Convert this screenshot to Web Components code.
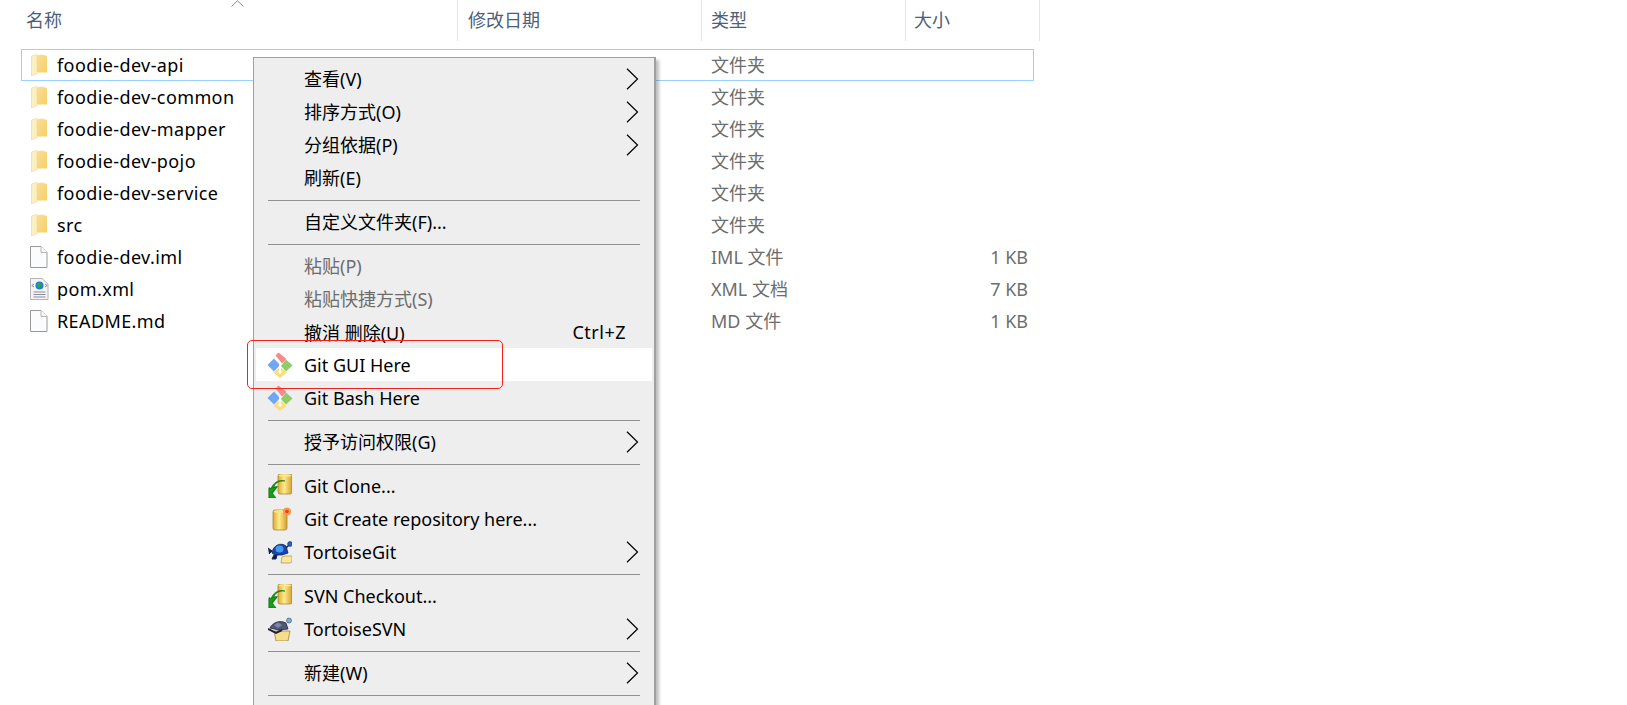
<!doctype html>
<html>
<head>
<meta charset="utf-8">
<title>foodie-dev</title>
<style>
    html, body { margin: 0; height: 100%; overflow: hidden; background: #fff; }
    body { font-family: "Noto Sans", "Noto Sans CJK SC", sans-serif; font-size: 18px; }
</style>
</head>
<body>
<explorer-window>
    <file-header slot="header"></file-header>
    <file-row icon="folder" type="文件夹" selected>foodie-dev-api</file-row>
    <file-row icon="folder" type="文件夹">foodie-dev-common</file-row>
    <file-row icon="folder" type="文件夹">foodie-dev-mapper</file-row>
    <file-row icon="folder" type="文件夹">foodie-dev-pojo</file-row>
    <file-row icon="folder" type="文件夹">foodie-dev-service</file-row>
    <file-row icon="folder" type="文件夹">src</file-row>
    <file-row icon="doc" type="IML 文件" size="1 KB">foodie-dev.iml</file-row>
    <file-row icon="xml" type="XML 文档" size="7 KB">pom.xml</file-row>
    <file-row icon="doc" type="MD 文件" size="1 KB">README.md</file-row>

    <context-menu slot="overlay">
        <menu-item arrow>查看(V)</menu-item>
        <menu-item arrow>排序方式(O)</menu-item>
        <menu-item arrow>分组依据(P)</menu-item>
        <menu-item>刷新(E)</menu-item>
        <menu-sep></menu-sep>
        <menu-item>自定义文件夹(F)...</menu-item>
        <menu-sep></menu-sep>
        <menu-item disabled>粘贴(P)</menu-item>
        <menu-item disabled>粘贴快捷方式(S)</menu-item>
        <menu-item shortcut="Ctrl+Z">撤消 删除(U)</menu-item>
        <menu-item icon="git" hover>Git GUI Here</menu-item>
        <menu-item icon="git">Git Bash Here</menu-item>
        <menu-sep></menu-sep>
        <menu-item arrow>授予访问权限(G)</menu-item>
        <menu-sep></menu-sep>
        <menu-item icon="clone">Git Clone...</menu-item>
        <menu-item icon="create">Git Create repository here...</menu-item>
        <menu-item icon="tgit" arrow>TortoiseGit</menu-item>
        <menu-sep></menu-sep>
        <menu-item icon="clone">SVN Checkout...</menu-item>
        <menu-item icon="tsvn" arrow>TortoiseSVN</menu-item>
        <menu-sep></menu-sep>
        <menu-item arrow>新建(W)</menu-item>
        <menu-sep></menu-sep>
    </context-menu>

    <red-mark slot="overlay"></red-mark>
</explorer-window>

<script>
const can = (x, y, w, h) => `
    <rect x="${x}" y="${y}" width="${w}" height="${h}" rx="2" fill="url(#gold)" stroke="#a8853a" stroke-width=".8"/>
    <ellipse cx="${x + w / 2}" cy="${y + 1.5}" rx="${w / 2 - .5}" ry="1.5" fill="#fbe58a"/>`

const goldDefs = `
    <defs>
        <linearGradient id="gold" x1="0" x2="1" y1="0" y2="0">
            <stop offset="0" stop-color="#e0a92f"/>
            <stop offset=".45" stop-color="#fdeb8e"/>
            <stop offset="1" stop-color="#d79f2a"/>
        </linearGradient>
    </defs>`

const gitMark = `
    <path d="M6 5.500 12 12 6 18.500-.5 12Z" fill="#6ea8f5"/>
    <path d="M18 6.500 24.500 12.500 18 18.500 13 13Z" fill="#8fcb66"/>
    <path d="M12 14 19 19.500 12 25 5.500 19.500Z" fill="#fbdd7a"/>
    <path d="M7.500 2.500 10.500-.5 18.500 6 14 10.500Z" fill="#f58a8a"/>
    <path d="M12 10V19" stroke="#fff" stroke-width="1.600"/>
    <circle cx="12" cy="19" r="1.700" fill="#fff"/>`

const ICONS = {
    folder: `<svg width="18" height="24" viewBox="0 0 18 24">
        <defs><linearGradient id="f" x1="0" x2="1" y1="0" y2="1">
            <stop offset="0" stop-color="#f9e096"/><stop offset="1" stop-color="#f5cf6c"/>
        </linearGradient></defs>
        <path d="M6 2.500 12 1.500 17 3V19.500H6Z" fill="url(#f)"/>
        <path d="M1.500 3 7 1.500V20.500L1.500 23Z" fill="#fdf0c0" stroke="#ecd390" stroke-width=".6"/>
    </svg>`,
    doc: `<svg width="18" height="24" viewBox="0 0 18 24">
        <path d="M.5 1.500H11L17 7.500V22.500H.5Z" fill="#fbfcfd" stroke="#9a9a9a"/>
        <path d="M11 1.500V7.500H17" fill="#fff" stroke="#b5b5b5"/>
    </svg>`,
    xml: `<svg width="20" height="24" viewBox="0 0 20 24">
        <path d="M.5 1.500H12L18 7V22.500H.5Z" fill="#f4f4f6" stroke="#b4b4ba"/>
        <circle cx="9.500" cy="8.500" r="4" fill="#1f7fd0"/>
        <path d="M7 6.500 10 5.500 11.500 8 9 10 8 12Z" fill="#38a83c"/>
        <path d="M4 7 1.800 8.500 4 10M15 7 17.200 8.500 15 10" fill="none" stroke="#8d8d95"/>
        <path d="M3.500 15H15.500M3.500 17.500H15.500M3.500 20H15.500" stroke="#8b8ba0"/>
    </svg>`,
    git: `<svg width="24" height="24" viewBox="0 0 24 24" style="overflow:visible">${gitMark}</svg>`,
    clone: `<svg width="24" height="24" viewBox="0 0 24 24">${goldDefs}
        ${can(10, 0, 14, 20)}
        <path d="M17 7C10 6.500 6.500 10 6 13L9.500 12.500 1 24 1 13.500 3 15C5 9 10 5 17 7Z" fill="#1a9a1a" stroke="#0c6a0c" stroke-width=".6"/>
        <path d="M1 14.500 9 13 4 18.500 8 24H1Z" fill="#17a017" stroke="#0c6a0c" stroke-width=".6"/>
    </svg>`,
    create: `<svg width="24" height="24" viewBox="0 0 24 24">${goldDefs}
        ${can(5, 3, 14, 20)}
        <circle cx="19" cy="4.500" r="4" fill="#f39a45"/>
        <circle cx="19" cy="4.500" r="1.800" fill="#e8402a"/>
    </svg>`,
    tgit: `<svg width="24" height="24" viewBox="0 0 24 24">
        <path d="M13 23 14 17 17 16H24V22L22 23Z" fill="#f9e6a0" stroke="#b99b4c" stroke-width=".8"/>
        <path d="M4 13C5 5 13 2 18 6L20 13 14 15H7Z" fill="#1a45b0" stroke="#10225c" stroke-width=".8"/>
        <ellipse cx="11.500" cy="9" rx="4" ry="3.500" fill="#3f9cf0"/>
        <circle cx="22" cy="4" r="2.400" fill="#2b62c8" stroke="#10225c" stroke-width=".6"/>
        <path d="M18 8 20.500 5.500" stroke="#10225c" stroke-width="1.500"/>
        <path d="M0 8 4 11 1 14M6 15 4 19H8L9 15" fill="#12204e" stroke="#12204e"/>
    </svg>`,
    tsvn: `<svg width="24" height="24" viewBox="0 0 24 24">
        <path d="M6 14H22L20 24H8Z" fill="#f5dd8a" stroke="#8f7a3a" stroke-width=".7"/>
        <path d="M2 11C5 5 12 3 18 6L20 12 11 13Z" fill="#4f5878" stroke="#25283c" stroke-width=".8"/>
        <path d="M6 8 10 5.500 14 8 10 11Z" fill="#7c86a8"/>
        <circle cx="21" cy="3.500" r="2.500" fill="#7db0d8" stroke="#34506c" stroke-width=".6"/>
        <path d="M0 12 8 16 14 13" fill="none" stroke="#1f2233" stroke-width="2"/>
    </svg>`
}

// header strip of the details view
class FileHeader extends HTMLElement {
    constructor() {
        super()
        this.attachShadow({ mode: 'open' })
        this.shadowRoot.innerHTML = `
            <style>
                :host {
                    display: grid;
                    grid-template-columns: 458px 244px 204px 134px;
                    height: 41px;
                    width: 1040px;
                    color: #4c607a;
                }
                .cell {
                    border-right: 1px solid #e5e5e5;
                    padding-left: 9px;
                    line-height: 41px;
                    position: relative;
                }
                .name { padding-left: 26px; }
                .date { padding-left: 10px; }
                .type { padding-left: 9px; }
                .size { padding-left: 8px; }
                svg { position: absolute; left: 231px; top: 0; }
            </style>
            <div class="cell name">名称
                <svg width="13" height="7" viewBox="0 0 13 7"><path d="M.5 6.500 6.500 .8 12.500 6.500" fill="none" stroke="#8a8a8a"/></svg>
            </div>
            <div class="cell date">修改日期</div>
            <div class="cell type">类型</div>
            <div class="cell size">大小</div>
        `
    }
}

// one line of the file list
class FileRow extends HTMLElement {
    constructor() {
        super()
        this.attachShadow({ mode: 'open' })
        const icon = this.getAttribute("icon") || "doc"
        const type = this.getAttribute("type") || ""
        const size = this.getAttribute("size") || ""
        this.shadowRoot.innerHTML = `
            <style>
                :host {
                    display: grid;
                    grid-template-columns: 27px 654px 1fr;
                    align-items: center;
                    box-sizing: border-box;
                    height: 32px;
                    width: 1013px;
                    margin-left: 21px;
                    padding-left: 8px;
                    border: 1px solid transparent;
                    color: #000;
                }
                :host([selected]) { border-color: #99d1ff; }
                .icon { display: flex; align-items: center; height: 24px; }
                .name { letter-spacing: .4px; }
                .meta { display: flex; justify-content: space-between; align-items: center; color: #6d6d6d; }
                .type { padding-bottom: 2px; }
                .size { padding-right: 5px; }
            </style>
            <div class="icon">${ICONS[icon]}</div>
            <div class="name"><slot></slot></div>
            <div class="meta"><span class="type">${type}</span><span class="size">${size}</span></div>
        `
    }
}

class ContextMenu extends HTMLElement {
    constructor() {
        super()
        this.attachShadow({ mode: 'open' })
        this.shadowRoot.innerHTML = `
            <style>
                :host {
                    display: block;
                    position: absolute;
                    left: 253px;
                    top: 57px;
                    bottom: -6px;
                    width: 403px;
                    box-sizing: border-box;
                    padding: 4px 2px 0 2px;
                    background: #eeeeee;
                    border: 1px solid #a0a0a0;
                    border-right-width: 2px;
                    box-shadow: 3px 3px 3px rgba(0, 0, 0, .25);
                    color: #000;
                }
            </style>
            <slot></slot>
        `
    }
}

class MenuItem extends HTMLElement {
    constructor() {
        super()
        this.attachShadow({ mode: 'open' })
        const icon = this.getAttribute("icon")
        const shortcut = this.getAttribute("shortcut")
        const arrow = this.hasAttribute("arrow")
        this.shadowRoot.innerHTML = `
            <style>
                :host {
                    display: grid;
                    grid-template-columns: 48px 1fr auto 26px;
                    align-items: center;
                    height: 33px;
                }
                :host([disabled]) { color: #6d6d6d; }
                :host([hover]) { background: #fff; }
                .icon { display: flex; padding-left: 12px; height: 24px; }
                .label { padding-bottom: 2px; }
                :host([icon]) .label, :host([shortcut]) .label { padding-bottom: 0; }
                .key { letter-spacing: .5px; }
                .arrow { display: flex; }
            </style>
            <div class="icon">${icon ? ICONS[icon] : ""}</div>
            <div class="label"><slot></slot></div>
            <div class="key">${shortcut || ""}</div>
            <div class="arrow">${arrow ? `<svg width="13" height="22" viewBox="0 0 13 22"><path d="M1 .8 11.500 11 1 21.200" fill="none" stroke="#000" stroke-width="1.200"/></svg>` : ""}</div>
        `
    }
}

class MenuSep extends HTMLElement {
    constructor() {
        super()
        this.attachShadow({ mode: 'open' })
        this.shadowRoot.innerHTML = `
            <style>
                :host { display: flex; align-items: center; height: 11px; padding: 0 12px; }
                div { flex: 1; height: 1px; background: #919191; margin-top: 2px; }
            </style>
            <div></div>
        `
    }
}

// the red annotation drawn over the screenshot
class RedMark extends HTMLElement {
    constructor() {
        super()
        this.attachShadow({ mode: 'open' })
        this.shadowRoot.innerHTML = `
            <style>
                :host {
                    display: block;
                    position: absolute;
                    left: 247px;
                    top: 340px;
                    width: 256px;
                    height: 49px;
                    box-sizing: border-box;
                    border: 1px solid #f5221b;
                    border-radius: 5px;
                }
            </style>
        `
    }
}

class ExplorerWindow extends HTMLElement {
    constructor() {
        super()
        this.attachShadow({ mode: 'open' })
        this.shadowRoot.innerHTML = `
            <style>
                :host {
                    display: block;
                    position: relative;
                    height: 705px;
                    overflow: hidden;
                }
                .rows { padding-top: 8px; }
            </style>
            <slot name="header"></slot>
            <div class="rows"><slot></slot></div>
            <slot name="overlay"></slot>
        `
    }
}

customElements.define('file-header', FileHeader)
customElements.define('file-row', FileRow)
customElements.define('context-menu', ContextMenu)
customElements.define('menu-item', MenuItem)
customElements.define('menu-sep', MenuSep)
customElements.define('red-mark', RedMark)
customElements.define('explorer-window', ExplorerWindow)
</script>
</body>
</html>
